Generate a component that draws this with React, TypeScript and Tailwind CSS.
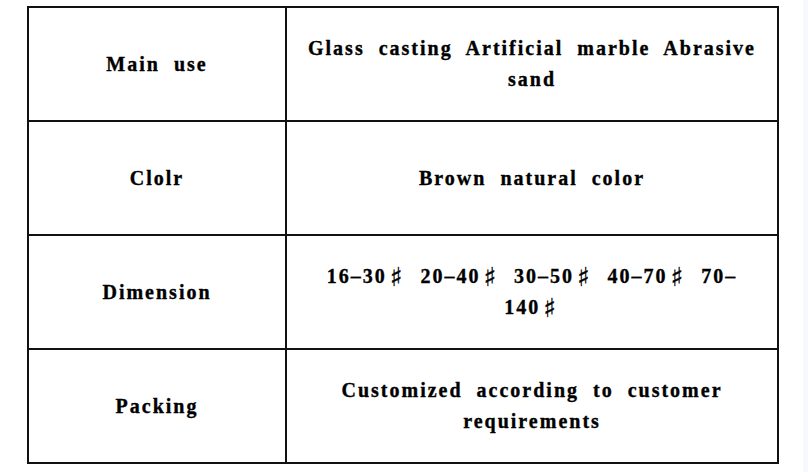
import React from 'react';

const ROWS = [
    { label: 'Main use', value: 'Glass casting Artificial marble Abrasive sand' },
    { label: 'Clolr', value: 'Brown natural color' },
    { label: 'Dimension', value: '16–30♯ 20–40♯ 30–50♯ 40–70♯ 70–140♯' },
    { label: 'Packing', value: 'Customized according to customer requirements' },
];

const cellText =
    "font-['Liberation_Serif'] font-bold text-[20px] leading-[31px] tracking-[2px] [word-spacing:7px] [-webkit-text-stroke:0.35px_black] text-black text-center";

// the sharp sign is drawn wider than the serif fallback gives it
const renderValue = (value: string) => {
    const parts = value.split('♯');
    return parts.map((part, i) => (
        <React.Fragment key={i}>
            {part}
            {i < parts.length - 1 && (
                <span className="font-['DejaVu_Sans'] font-normal text-[26px] leading-none tracking-normal align-[-3px] ml-[3px] mr-[4px]">♯</span>
            )}
        </React.Fragment>
    ));
};

const App: React.FC = () => {
    return (
        <div className="w-[808px] h-[472px] bg-white flex">
            <div className="flex-1 pl-[27px] pt-[6px]">
                <div className="w-[752px] border-t-2 border-l-2 border-[#111] grid grid-cols-[258px_492px]">
                    {ROWS.map((row) => (
                        <React.Fragment key={row.label}>
                            <div className="h-[114px] border-r-2 border-b-2 border-[#111] flex items-center justify-center px-4">
                                <span className={cellText}>{row.label}</span>
                            </div>
                            <div className="h-[114px] border-r-2 border-b-2 border-[#111] flex items-center justify-center px-4">
                                <p className={cellText}>{renderValue(row.value)}</p>
                            </div>
                        </React.Fragment>
                    ))}
                </div>
            </div>
            <div className="w-[5px] h-full bg-[#f6f8fd]"></div>
        </div>
    );
};

export default App;
